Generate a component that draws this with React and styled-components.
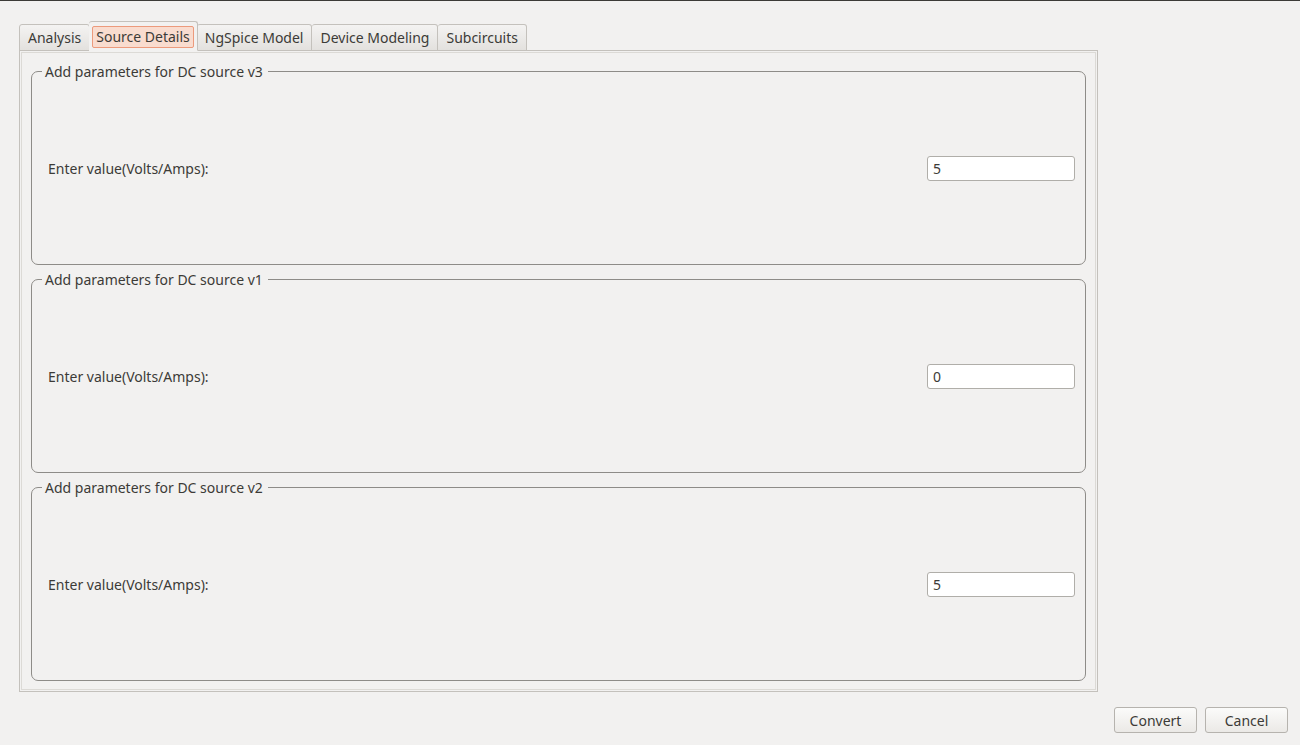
import React from 'react';
import styled, { createGlobalStyle } from 'styled-components';

const GlobalStyle = createGlobalStyle`
  html, body {
    margin: 0;
    padding: 0;
    background: #f2f1f0;
  }
  body {
    font-family: "Noto Sans", "DejaVu Sans", sans-serif;
    font-size: 14px;
    color: #3c3b37;
  }
`;

const Window = styled.div`
  width: 1300px;
  height: 745px;
  box-sizing: border-box;
  border-top: 1px solid #3c3b37;
  background: #f2f1f0;
  display: flex;
  flex-direction: column;
`;

const Body = styled.div`
  padding: 20px 0 0 19px;
  width: 1079px;
  display: flex;
  flex-direction: column;
`;

const TabBar = styled.div`
  display: flex;
  align-items: flex-end;
  height: 30px;
  position: relative;
  z-index: 1;
  margin-bottom: -1px;
`;

const Tab = styled.div`
  box-sizing: border-box;
  height: ${({ active }) => (active ? '30px' : '27px')};
  padding: ${({ active }) => (active ? '4px 3px 3px' : '0 8px 1px')};
  margin: ${({ active }) => (active ? '0 -1px' : '0')};
  border: 1px solid #c4c1bc;
  border-bottom: ${({ active }) => (active ? '1px solid #f2f1f0' : '1px solid #c4c1bc')};
  border-radius: 3px 3px 0 0;
  background: ${({ active }) =>
    active ? '#f2f1f0' : 'linear-gradient(#f4f3f2, #e3e1de)'};
  display: flex;
  align-items: center;
  white-space: nowrap;
  position: relative;
  z-index: ${({ active }) => (active ? 2 : 1)};
  & + & {
    border-left: none;
  }
`;

const TabFocus = styled.span`
  display: flex;
  align-items: center;
  height: 20px;
  padding: 0 3px;
  border: 1px solid #ec9a7c;
  border-radius: 2px;
  background: #f9dccf;
`;

const Panel = styled.div`
  box-sizing: border-box;
  height: 642px;
  border: 1px solid #c4c1bc;
  padding: 1px;
`;

const PanelInner = styled.div`
  box-sizing: border-box;
  height: 100%;
  border: 1px solid #dcdad6;
  padding: 10px 9px 8px 9px;
  display: flex;
  flex-direction: column;
  gap: 6px;
`;

const Group = styled.fieldset`
  flex: 1;
  margin: 0;
  padding: 0 10px 0 16px;
  min-width: 0;
  border: 1px solid #8e8c88;
  border-radius: 7px;
  display: flex;
  align-items: center;
  justify-content: space-between;
`;

const Legend = styled.legend`
  margin-left: -6px;
  padding: 0 5px 0 3px;
  line-height: 17px;
`;

const Label = styled.span`
  margin-top: -8px;
`;

const Input = styled.input`
  box-sizing: border-box;
  width: 148px;
  height: 25px;
  margin-top: -8px;
  border: 1px solid #b0aea9;
  border-radius: 3px;
  background: #fff;
  font: inherit;
  color: #3c3b37;
  padding: 0 5px;
  outline: none;
`;

const Footer = styled.div`
  display: flex;
  justify-content: flex-end;
  gap: 8px;
  padding: 15px 12px 0 0;
`;

const Button = styled.button`
  box-sizing: border-box;
  width: 83px;
  height: 26px;
  border: 1px solid #b6b3ae;
  border-radius: 3px;
  background: linear-gradient(#fbfbfa, #ebe9e6);
  font: inherit;
  color: #3c3b37;
  padding: 0;
`;

const tabs = ['Analysis', 'Source Details', 'NgSpice Model', 'Device Modeling', 'Subcircuits'];

const sources = [
  { name: 'v3', value: '5' },
  { name: 'v1', value: '0' },
  { name: 'v2', value: '5' },
];

const App = () => (
  <Window>
    <GlobalStyle />
    <Body>
      <TabBar>
        {tabs.map((t, i) =>
          i === 1 ? (
            <Tab key={t} active>
              <TabFocus>{t}</TabFocus>
            </Tab>
          ) : (
            <Tab key={t}>{t}</Tab>
          )
        )}
      </TabBar>
      <Panel>
        <PanelInner>
          {sources.map(s => (
            <Group key={s.name}>
              <Legend>Add parameters for DC source {s.name}</Legend>
              <Label>Enter value(Volts/Amps):</Label>
              <Input defaultValue={s.value} />
            </Group>
          ))}
        </PanelInner>
      </Panel>
    </Body>
    <Footer>
      <Button>Convert</Button>
      <Button>Cancel</Button>
    </Footer>
  </Window>
);

export default App;
